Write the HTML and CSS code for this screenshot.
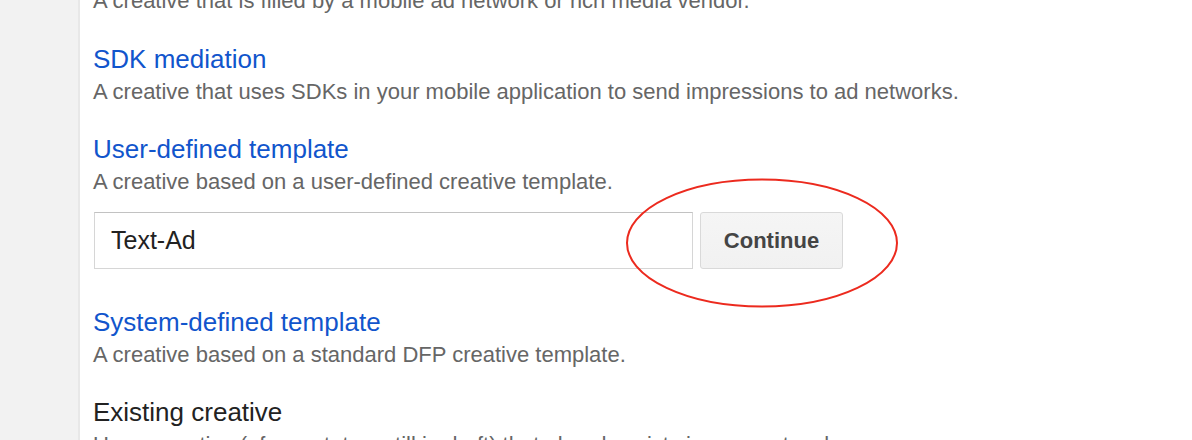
FILE: index.html
```html
<!DOCTYPE html>
<html>
<head>
<meta charset="utf-8">
<link rel="stylesheet" href="styles.css">
</head>
<body>
<div class="page">
  <aside class="sidebar"></aside>
  <main class="main">
    <p class="desc">A creative that is filled by a mobile ad network or rich media vendor.</p>
    <section class="group">
      <a class="title" href="#">SDK mediation</a>
      <p class="desc">A creative that uses SDKs in your mobile application to send impressions to ad networks.</p>
    </section>
    <section class="group">
      <a class="title" href="#">User-defined template</a>
      <p class="desc">A creative based on a user-defined creative template.</p>
      <div class="form-row">
        <input class="field" type="text" value="Text-Ad">
        <button class="btn">Continue</button>
      </div>
    </section>
    <section class="group group-after-form">
      <a class="title" href="#">System-defined template</a>
      <p class="desc">A creative based on a standard DFP creative template.</p>
    </section>
    <section class="group">
      <span class="title title-plain">Existing creative</span>
      <p class="desc">Use a creative (of any status, still in draft) that already exists in your network.</p>
    </section>
  </main>
  <svg class="annotation" width="290" height="140" viewBox="0 0 290 140">
    <ellipse cx="145" cy="70" rx="135" ry="63.5" fill="none" stroke="#ec2a1e" stroke-width="2"/>
  </svg>
</div>
</body>
</html>
```
FILE: styles.css
```css
html, body {
  margin: 0;
  padding: 0;
  background: #ffffff;
  font-family: "Liberation Sans", Arial, sans-serif;
  overflow: hidden;
}
.page {
  position: relative;
  display: flex;
  width: 1192px;
  height: 440px;
  overflow: hidden;
}
.sidebar {
  flex: 0 0 78px;
  background: #f2f2f2;
  border-right: 2px solid #e8e8e8;
}
.main {
  flex: 1;
  padding-left: 13px;
  margin-top: -15px;
}
.desc {
  margin: 0;
  font-size: 22px;
  line-height: 32px;
  color: #666666;
  white-space: nowrap;
}
.group {
  margin-top: 25px;
  display: flex;
  flex-direction: column;
  align-items: flex-start;
}
.group + .group {
  margin-top: 24px;
}
.group-after-form {
  margin-top: 36px !important;
}
.title {
  display: block;
  font-size: 26px;
  line-height: 34px;
  color: #1155cc;
  text-decoration: none;
}
.title-plain {
  color: #222222;
}
.form-row {
  display: flex;
  gap: 7px;
  margin-top: 14px;
  margin-left: 1px;
}
.field {
  box-sizing: border-box;
  width: 599px;
  height: 57px;
  margin: 0;
  padding: 0 0 0 16px;
  border: 1px solid #d6d6d6;
  border-top-color: #c2c2c2;
  border-radius: 0;
  font-family: "Liberation Sans", Arial, sans-serif;
  font-size: 25px;
  color: #222222;
  background: #ffffff;
  outline: none;
}
.btn {
  box-sizing: border-box;
  width: 143px;
  height: 57px;
  margin: 0;
  padding: 0;
  border: 1px solid #d9d9d9;
  border-radius: 3px;
  background: linear-gradient(#f5f5f5, #f1f1f1);
  font-family: "Liberation Sans", Arial, sans-serif;
  font-size: 22px;
  font-weight: bold;
  color: #444444;
}
.annotation {
  position: absolute;
  left: 617px;
  top: 173px;
}
```
